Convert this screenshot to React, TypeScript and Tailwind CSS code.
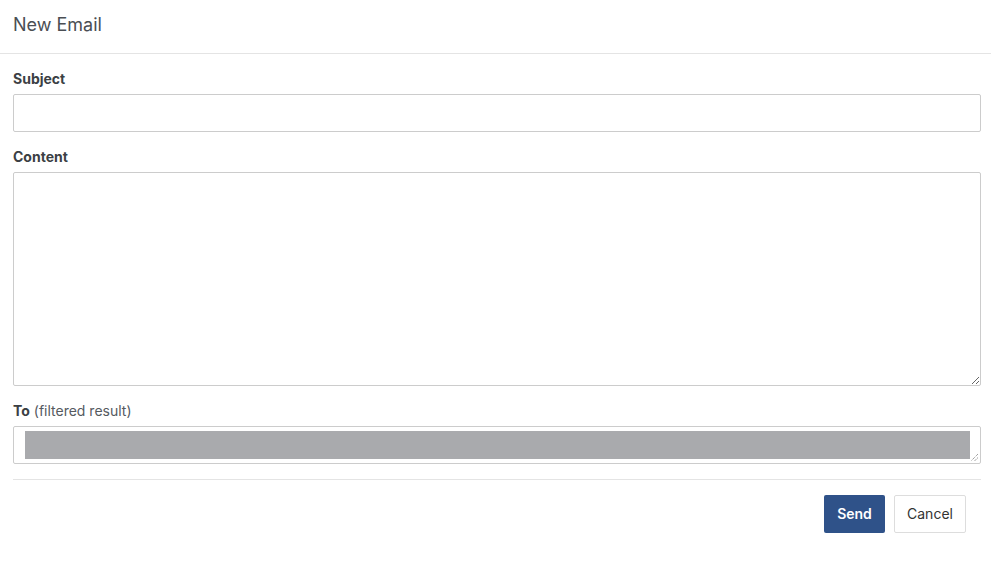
function ResizeGrip() {
  return (
    <svg className="absolute right-[1px] bottom-[1px]" width="9" height="9" viewBox="0 0 9 9">
      <path d="M8 1L1 8M8 4.5L4.5 8" stroke="#777" strokeWidth="1" strokeDasharray="1 1" />
    </svg>
  );
}

export default function App() {
  return (
    <div className="w-[991px] h-[561px] bg-white text-[#3b3f44]" style={{ fontFamily: 'Inter, "Noto Sans", sans-serif' }}>
      <div className="h-[54px] flex items-center px-[13px] border-b border-[#e4e4e4]">
        <h1 className="text-[18px] text-[#4a4e53] pb-[4px]">New Email</h1>
      </div>

      <div className="pl-[13px] pr-[10px] pt-[16px]">
        <label className="block text-[14px] font-bold leading-[18px] mb-[6px]">Subject</label>
        <input className="block w-full h-[38px] border border-[#cccccc] rounded-[2px] outline-none px-2" />

        <label className="block text-[14px] font-bold leading-[18px] mt-[16px] mb-[6px]">Content</label>
        <textarea className="block w-full h-[214px] border border-[#cccccc] rounded-[2px] outline-none p-2 resize-y" />

        <label className="block text-[14px] leading-[18px] mt-[16px] mb-[6px]">
          <span className="font-bold">To</span> <span className="text-[#555a5f]">(filtered result)</span>
        </label>
        <div className="relative h-[38px] border border-[#cccccc] rounded-[2px] pl-[11px] pr-[10px] pt-[4px]">
          <div className="h-[28px] bg-[#a9aaad]" />
          <ResizeGrip />
        </div>

        <div className="border-t border-[#e4e4e4] mt-[15px] pt-[15px] flex justify-end gap-[9px] pr-[15px]">
          <button className="h-[38px] w-[61px] rounded-[2px] bg-[#2f5289] text-white text-[14px] font-semibold pb-[1px]">Send</button>
          <button className="h-[38px] w-[72px] rounded-[2px] border border-[#dddddd] bg-white text-[#333] text-[14px] pb-[1px]">Cancel</button>
        </div>
      </div>
    </div>
  );
}
